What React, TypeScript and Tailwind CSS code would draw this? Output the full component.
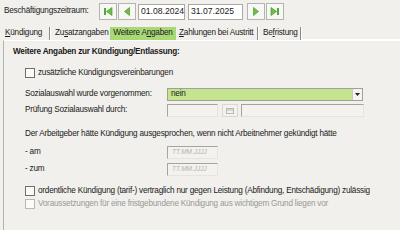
import React from "react";

const Nav = ({ kind }: { kind: "first" | "prev" | "next" | "last" }) => (
  <div className="w-[18px] h-[17px] border border-[#b5b5b0] bg-[#f7f7f4] flex items-center justify-center">
    <svg width="10" height="9" viewBox="0 0 10 9">
      {kind === "first" && (
        <>
          <rect x="1" y="1" width="2" height="7" fill="#5aa53a" />
          <polygon points="9,0.5 9,8.5 3.5,4.5" fill="#6fbf45" stroke="#3d8a25" strokeWidth="0.6" />
        </>
      )}
      {kind === "prev" && <polygon points="7.5,0.5 7.5,8.5 2.5,4.5" fill="#6fbf45" stroke="#3d8a25" strokeWidth="0.6" />}
      {kind === "next" && <polygon points="2.5,0.5 2.5,8.5 7.5,4.5" fill="#6fbf45" stroke="#3d8a25" strokeWidth="0.6" />}
      {kind === "last" && (
        <>
          <polygon points="1,0.5 1,8.5 6.5,4.5" fill="#6fbf45" stroke="#3d8a25" strokeWidth="0.6" />
          <rect x="7" y="1" width="2" height="7" fill="#5aa53a" />
        </>
      )}
    </svg>
  </div>
);

const Sep = () => <div className="w-[2px] h-[13px] border-l border-[#8a8a86] border-r border-r-white shrink-0" />;

const Check = ({ disabled }: { disabled?: boolean }) => (
  <div className={`w-[10px] h-[10px] shrink-0 border ${disabled ? "border-[#b8b8b4]" : "border-[#6e6e6a]"} bg-[#fbfbfa]`} />
);

const Field = ({ w, placeholder }: { w: string; placeholder?: string }) => (
  <div
    className={`${w} h-[13px] border border-t-[#a4a4a0] border-l-[#a4a4a0] border-r-[#e4e4e0] border-b-[#e4e4e0] bg-[#f3f2ee] flex items-center pl-[4px] text-[6.5px] italic text-[#b2b2b2] tracking-normal`}
  >
    {placeholder}
  </div>
);

export default function App() {
  return (
    <div
      className="w-[400px] h-[230px] bg-[#f1f0ec] text-[#1a1a1a] overflow-hidden text-[8.2px] leading-none tracking-[-0.22px] whitespace-nowrap"
      style={{ fontFamily: '"Liberation Sans", Arial, sans-serif' }}
    >
      {/* top row */}
      <div className="flex items-center pt-[3px] pl-[4px] h-[20px]">
        <div className="w-[95px]">Beschäftigungszeitraum:</div>
        <div className="flex items-center gap-[1px]">
          <Nav kind="first" />
          <Nav kind="prev" />
          <div className="ml-[1px] w-[47px] h-[16px] bg-white border border-[#a9a9a5] flex items-center pl-[2px] text-[8.6px] tracking-normal">01.08.2024</div>
          <div className="ml-[2px] w-[55px] h-[16px] bg-white border border-[#a9a9a5] flex items-center pl-[2px] text-[8.6px] tracking-normal">31.07.2025</div>
          <div className="ml-[3px] flex gap-[1px]">
            <Nav kind="next" />
            <Nav kind="last" />
          </div>
        </div>
      </div>

      {/* tabs */}
      <div className="mt-[7px] flex items-end h-[13px] pl-[5px]">
        <div className="flex items-center h-[13px] w-[44px] shrink-0"><span className="underline">K</span>ündigung</div>
        <Sep />
        <div className="flex items-center h-[13px] pl-[4px] w-[58px] shrink-0">Zu<span className="underline">s</span>atzangaben</div>
        <div className="h-[13px] w-[66px] ml-[1px] shrink-0 bg-[#a9d977] flex items-center justify-center">Weitere A<span className="underline">n</span>gaben</div>
        <div className="flex items-center h-[13px] pl-[3px] w-[81px] shrink-0"><span className="underline">Z</span>ahlungen bei Austritt</div>
        <Sep />
        <div className="flex items-center h-[13px] pl-[4px] w-[41px] shrink-0">Be<span className="underline">f</span>ristung</div>
        <Sep />
        <div className="flex-1 self-end border-b border-white" />
      </div>

      {/* panel */}
      <div className="ml-[3px] h-[200px] border-l border-[#b4b4b0] border-t border-t-white pl-[9px] pt-[7px]">
        <div className="font-bold h-[10px]">Weitere Angaben zur Kündigung/Entlassung:</div>

        <div className="mt-[10px] ml-[12px] flex items-center gap-[3px] h-[10px]">
          <Check />
          <span>zusätzliche Kündigungsvereinbarungen</span>
        </div>

        <div className="mt-[10px] ml-[12px] flex items-center h-[13px]">
          <div className="w-[142px]">Sozialauswahl wurde vorgenommen:</div>
          <div className="w-[196px] h-[13px] border border-[#a0a09c] bg-[#c5e48f] flex items-center">
            <span className="flex-1 pl-[3px]">nein</span>
            <div className="w-[10px] h-[11px] bg-[#f4f4f2] border-l border-[#c8c8c4] flex items-center justify-center">
              <svg width="5" height="3" viewBox="0 0 5 3"><polygon points="0,0 5,0 2.5,3" fill="#222" /></svg>
            </div>
          </div>
        </div>

        <div className="mt-[3px] ml-[12px] flex items-center h-[13px]">
          <div className="w-[142px]">Prüfung Sozialauswahl durch:</div>
          <Field w="w-[51px]" />
          <div className="ml-[4px] w-[16px] h-[13px] border border-[#d8d8d4] bg-[#f3f2ee] flex items-center justify-center">
            <svg width="8" height="6" viewBox="0 0 8 6"><rect x="0.5" y="0.5" width="7" height="5" fill="none" stroke="#b8b8b4" /><line x1="0.5" y1="2" x2="7.5" y2="2" stroke="#b8b8b4" /></svg>
          </div>
          <div className="ml-[3px]"><Field w="w-[123px]" /></div>
        </div>

        <div className="mt-[13px] ml-[12px] h-[10px]">Der Arbeitgeber hätte Kündigung ausgesprochen, wenn nicht Arbeitnehmer gekündigt hätte</div>

        <div className="mt-[6px] ml-[12px] flex items-center h-[13px]">
          <div className="w-[142px]">- am</div>
          <Field w="w-[51px]" placeholder="TT.MM.JJJJ" />
        </div>
        <div className="mt-[4px] ml-[12px] flex items-center h-[13px]">
          <div className="w-[142px]">- zum</div>
          <Field w="w-[51px]" placeholder="TT.MM.JJJJ" />
        </div>

        <div className="mt-[10px] ml-[12px] flex items-center gap-[3px] h-[10px]">
          <Check />
          <span>ordentliche Kündigung (tarif-) vertraglich nur gegen Leistung (Abfindung, Entschädigung) zulässig</span>
        </div>
        <div className="mt-[3px] ml-[12px] flex items-center gap-[3px] h-[10px] text-[#9a9a96]">
          <Check disabled />
          <span>Voraussetzungen für eine fristgebundene Kündigung aus wichtigem Grund liegen vor</span>
        </div>
      </div>
    </div>
  );
}
